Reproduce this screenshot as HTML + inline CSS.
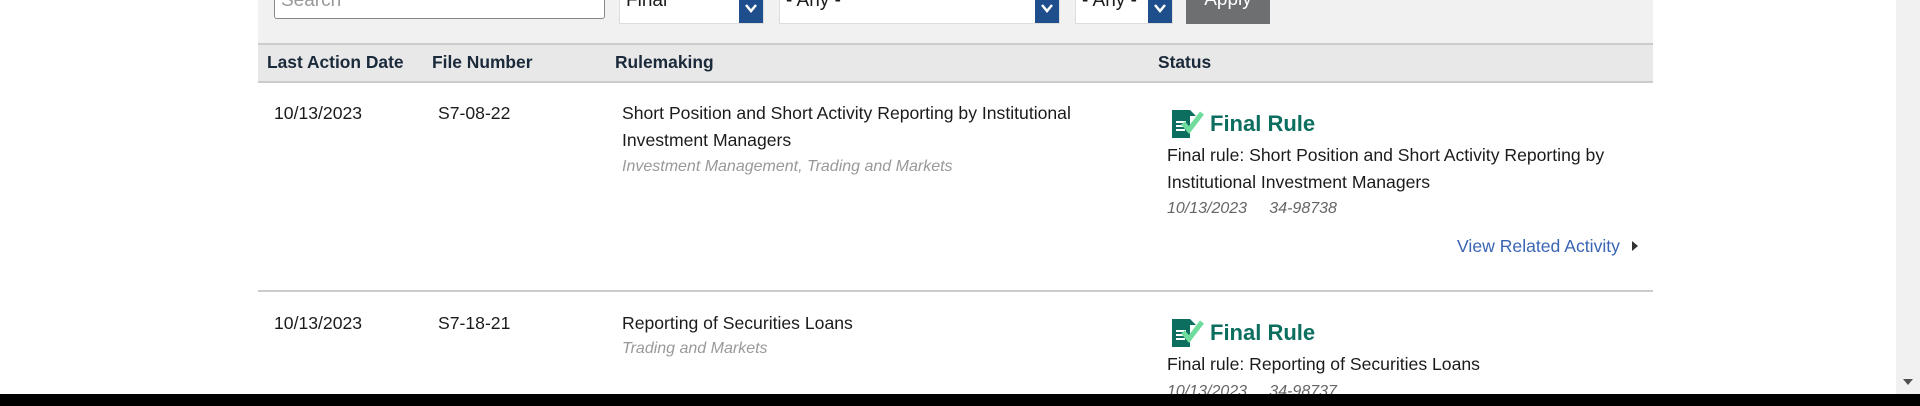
<!DOCTYPE html>
<html><head><meta charset="utf-8"><style>
*{margin:0;padding:0;box-sizing:border-box}
body{width:1920px;height:406px;overflow:hidden;background:#fff;font-family:"Liberation Sans",sans-serif;position:relative;color:#1b1b1b}
.a{position:absolute;white-space:nowrap}
.sel{position:absolute;top:-10px;height:34px;background:#fff;border:1px solid #ddd;font-size:19px;padding-left:6px;line-height:20px}
.arr{position:absolute;right:0;top:0;bottom:0;width:24px;background:#1f4e8c}
.h{font-weight:bold;font-size:17.4px;color:#1b2a3a;top:52px}
.t{font-size:17.6px;line-height:27px}
.s{font-size:16px;font-style:italic;color:#999}
.fr{font-size:22px;font-weight:bold;color:#0b6e5f}
.d{font-size:16px;font-style:italic;color:#666}
</style></head><body>
<div class="a" style="left:258px;top:0;width:1395px;height:43px;background:#f1f1f1"></div>
<div class="a" style="left:274px;top:-10px;width:331px;height:29px;background:#fff;border:1px solid #888;border-radius:3px;font-size:19px;color:#999;padding-left:6px;line-height:20px">Search</div>
<div class="sel" style="left:619px;width:145px">Final<div class="arr"><svg width="24" height="34"><path d="M7 14 L12 20 L17 14" stroke="#fff" stroke-width="2.5" fill="none"/></svg></div></div>
<div class="sel" style="left:779px;width:281px">- Any -<div class="arr"><svg width="24" height="34"><path d="M7 14 L12 20 L17 14" stroke="#fff" stroke-width="2.5" fill="none"/></svg></div></div>
<div class="sel" style="left:1075px;width:98px">- Any -<div class="arr"><svg width="24" height="34"><path d="M7 14 L12 20 L17 14" stroke="#fff" stroke-width="2.5" fill="none"/></svg></div></div>
<div class="a" style="left:1186px;top:-10px;width:84px;height:34px;background:#6d6f71;color:#fff;font-size:19px;text-align:center;line-height:20px">Apply</div>
<div class="a" style="left:258px;top:43px;width:1395px;height:40px;background:#e8e8e8;border-top:2px solid #ccc;border-bottom:2px solid #ccc"></div>
<div class="a h" style="left:267px">Last Action Date</div>
<div class="a h" style="left:432px">File Number</div>
<div class="a h" style="left:615px">Rulemaking</div>
<div class="a h" style="left:1158px">Status</div>

<div class="a t" style="left:274px;top:100px">10/13/2023</div>
<div class="a t" style="left:438px;top:100px">S7-08-22</div>
<div class="a t" style="left:622px;top:100px">Short Position and Short Activity Reporting by Institutional<br>Investment Managers</div>
<div class="a s" style="left:622px;top:158px">Investment Management, Trading and Markets</div>
<svg class="a" style="left:1172px;top:108px" width="34" height="32" viewBox="0 0 34 32"><rect x="0" y="2" width="18" height="28" fill="#0b6e5f"/><path d="M18 2 L24 8 L18 8Z" fill="#0b6e5f"/><path d="M4 14h10M4 18h10M4 22h9" stroke="#fff" stroke-width="2"/><path d="M11 15 L17 22 L30 5" stroke="#6fdc9e" stroke-width="5" fill="none"/></svg>
<div class="a fr" style="left:1210px;top:111px">Final Rule</div>
<div class="a t" style="left:1167px;top:142px">Final rule: Short Position and Short Activity Reporting by<br>Institutional Investment Managers</div>
<div class="a d" style="left:1167px;top:200px">10/13/2023&nbsp;&nbsp;&nbsp;&nbsp;&nbsp;34-98738</div>
<div class="a" style="left:1457px;top:236px;font-size:17.6px;color:#3a64b4">View Related Activity</div>
<svg class="a" style="left:1631px;top:240px" width="8" height="12"><path d="M1 1 L7 6 L1 11Z" fill="#333"/></svg>
<div class="a" style="left:258px;top:290px;width:1395px;height:2px;background:#ccc"></div>

<div class="a t" style="left:274px;top:310px">10/13/2023</div>
<div class="a t" style="left:438px;top:310px">S7-18-21</div>
<div class="a t" style="left:622px;top:310px">Reporting of Securities Loans</div>
<div class="a s" style="left:622px;top:340px">Trading and Markets</div>
<svg class="a" style="left:1172px;top:317px" width="34" height="32" viewBox="0 0 34 32"><rect x="0" y="2" width="18" height="28" fill="#0b6e5f"/><path d="M18 2 L24 8 L18 8Z" fill="#0b6e5f"/><path d="M4 14h10M4 18h10M4 22h9" stroke="#fff" stroke-width="2"/><path d="M11 15 L17 22 L30 5" stroke="#6fdc9e" stroke-width="5" fill="none"/></svg>
<div class="a fr" style="left:1210px;top:320px">Final Rule</div>
<div class="a t" style="left:1167px;top:351px">Final rule: Reporting of Securities Loans</div>
<div class="a d" style="left:1167px;top:383px">10/13/2023&nbsp;&nbsp;&nbsp;&nbsp;&nbsp;34-98737</div>

<div class="a" style="left:1896px;top:0;width:24px;height:406px;background:#f1f1f1"></div>
<div class="a" style="left:1903px;top:379px;width:0;height:0;border-left:5px solid transparent;border-right:5px solid transparent;border-top:6px solid #505050"></div>
<div class="a" style="left:0;top:394px;width:1920px;height:12px;background:#000"></div>
</body></html>
